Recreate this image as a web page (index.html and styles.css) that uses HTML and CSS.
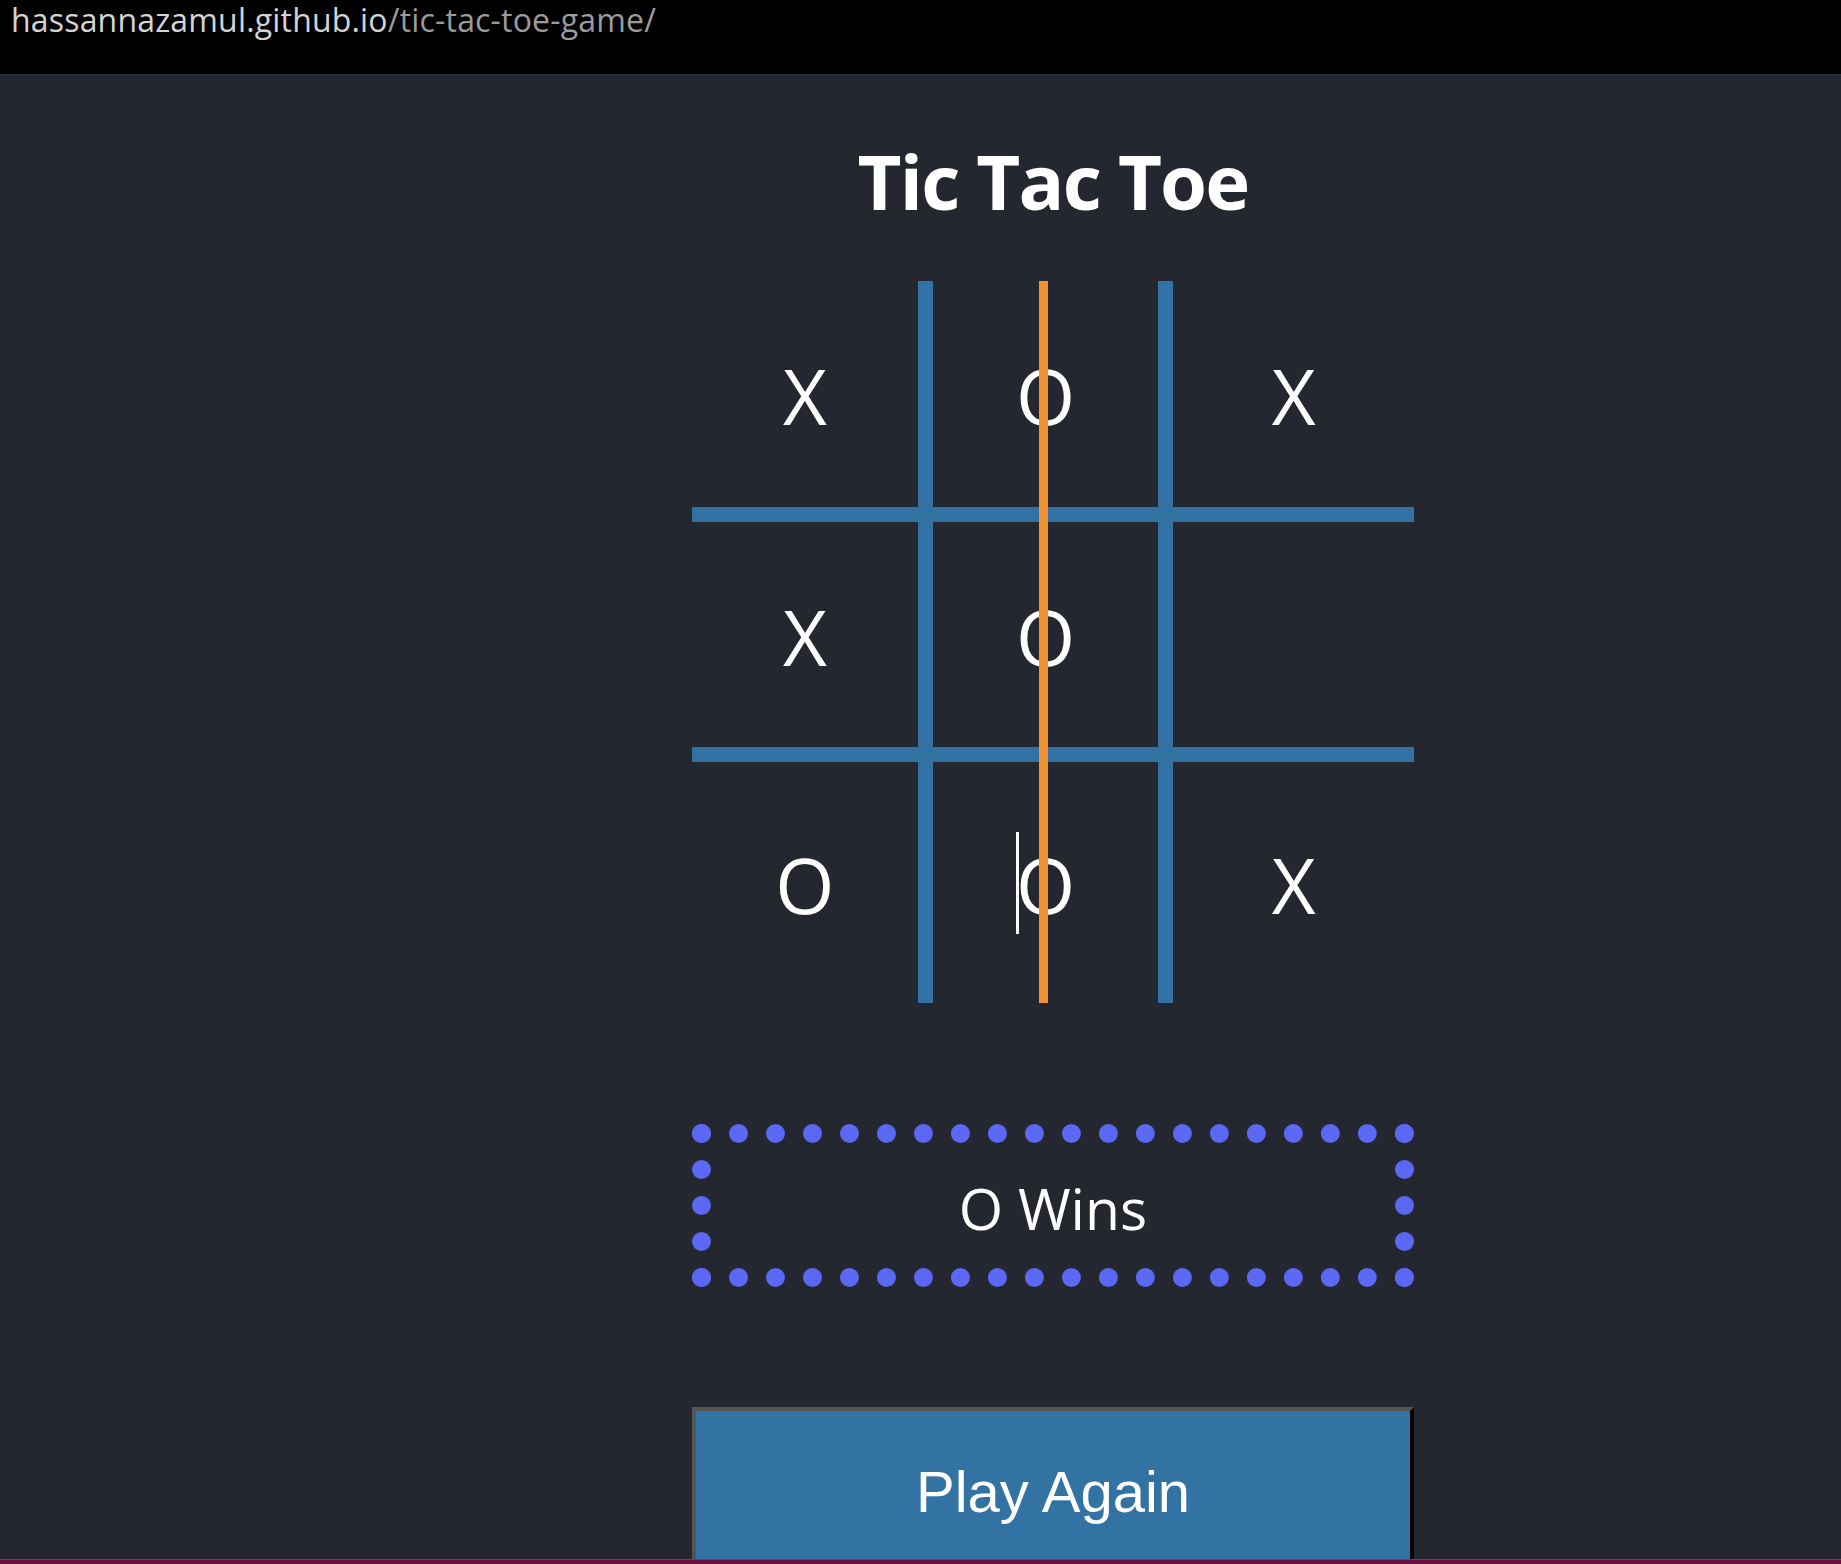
FILE: index.html
```html
<!DOCTYPE html>
<html lang="en">
<head>
<meta charset="utf-8">
<title>Tic Tac Toe</title>
<link rel="stylesheet" href="styles.css">
</head>
<body>
  <header class="urlbar">
    <span class="url-host">hassannazamul.github.io</span><span class="url-path">/tic-tac-toe-game/</span>
  </header>
  <main class="page">
    <div class="game">
      <h1 class="title">Tic Tac Toe</h1>
      <div class="board">
        <div class="cell">X</div>
        <div class="cell">O</div>
        <div class="cell">X</div>
        <div class="cell">X</div>
        <div class="cell">O</div>
        <div class="cell"></div>
        <div class="cell">O</div>
        <div class="cell">O</div>
        <div class="cell">X</div>
        <div class="strike"></div>
        <div class="caret"></div>
      </div>
      <div class="status">O Wins</div>
      <button class="again">Play Again</button>
    </div>
  </main>
  <footer class="taskbar"></footer>
</body>
</html>
```

FILE: styles.css
```css
html, body {
  margin: 0;
  padding: 0;
}
body {
  height: 1564px;
  overflow: hidden;
  background: #24272f;
  display: flex;
  flex-direction: column;
  font-family: "Open Sans", "Noto Sans", sans-serif;
  color: #fff;
}
.urlbar {
  flex: none;
  height: 74px;
  background: #000;
  border-bottom: 1px solid #30323a;
  box-sizing: content-box;
  padding-left: 11px;
  font-size: 32px;
  line-height: 40px;
  letter-spacing: 0.18px;
  white-space: nowrap;
}
.url-host { color: #d4d4d4; }
.url-path { color: #9b9b9b; }

.page {
  flex: 1;
  overflow: hidden;
  padding-left: 692px;
}
.game {
  width: 722px;
  display: flex;
  flex-direction: column;
}
.title {
  margin: 66px 0 0;
  height: 80px;
  font-size: 76px;
  line-height: 80px;
  font-weight: 700;
  text-align: center;
  letter-spacing: -1.8px;
}
.board {
  position: relative;
  margin-top: 60px;
  width: 722px;
  height: 722px;
  display: grid;
  grid-template-columns: repeat(3, 1fr);
  grid-template-rows: repeat(3, 1fr);
}
.cell {
  box-sizing: border-box;
  display: flex;
  align-items: center;
  justify-content: center;
  font-size: 76px;
  font-weight: 400;
  padding-top: 4px;
}
.cell:nth-child(-n+6) { border-bottom: 15px solid #3272a2; }
.cell:nth-child(3n+1), .cell:nth-child(3n+2) { border-right: 15px solid #3272a2; }
.strike {
  position: absolute;
  left: 347px;
  top: 0;
  width: 9px;
  height: 722px;
  background: #f09232;
}
.caret {
  position: absolute;
  left: 324px;
  top: 551px;
  width: 3px;
  height: 102px;
  background: #fff;
}
.status {
  margin-top: 121px;
  height: 163px;
  box-sizing: border-box;
  border: 19px dotted #5a68f4;
  display: flex;
  align-items: center;
  justify-content: center;
  font-size: 57px;
  padding-top: 4px;
}
.again {
  margin-top: 120px;
  flex: none;
  height: 168px;
  width: 722px;
  box-sizing: border-box;
  border: 4px solid;
  border-color: #555 #000 #000 #555;
  background: #3273a3;
  color: #fff;
  font-family: "Liberation Sans", Arial, sans-serif;
  font-size: 58px;
  padding: 0;
}
.taskbar {
  flex: none;
  height: 4px;
  background: #6d0f43;
  border-top: 1px solid #7a3a58;
}
```
